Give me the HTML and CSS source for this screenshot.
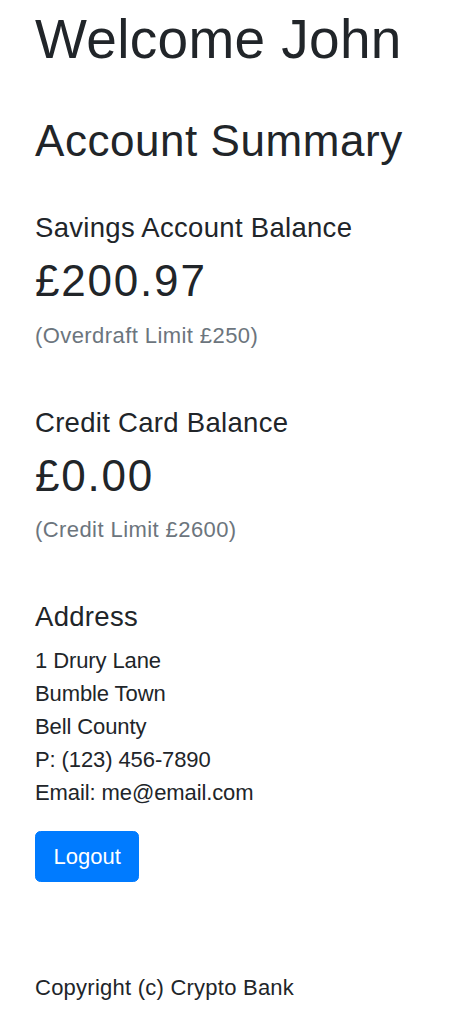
FILE: index.html
```html
<!DOCTYPE html>
<html lang="en">
<head>
<meta charset="utf-8">
<title>Crypto Bank</title>
<link rel="stylesheet" href="styles.css">
</head>
<body>
<div class="container">
  <h1 class="welcome">Welcome John</h1>
  <h2 class="summary-title">Account Summary</h2>

  <section class="account">
    <h5 class="account-label">Savings Account Balance</h5>
    <h2 class="amount">£200.97</h2>
    <p class="limit">(Overdraft Limit £250)</p>
  </section>

  <section class="account">
    <h5 class="account-label">Credit Card Balance</h5>
    <h2 class="amount">£0.00</h2>
    <p class="limit">(Credit Limit £2600)</p>
  </section>

  <section class="address-block">
    <h5 class="account-label">Address</h5>
    <address class="address">
      1 Drury Lane<br>
      Bumble Town<br>
      Bell County<br>
      P: (123) 456-7890<br>
      Email: me@email.com
    </address>
  </section>

  <button class="btn-logout" type="button">Logout</button>

  <footer class="footer">Copyright (c) Crypto Bank</footer>
</div>
</body>
</html>
```
FILE: styles.css
```css
html, body {
  margin: 0;
  padding: 0;
  background: #ffffff;
}

body {
  font-family: "Liberation Sans", Arial, sans-serif;
  font-size: 22px;
  line-height: 33px;
  color: #212529;
}

.container {
  padding: 6px 20px 0 35px;
}

.welcome {
  font-size: 55px;
  line-height: 66px;
  font-weight: 400;
  letter-spacing: 0.33px;
  margin: 0 0 43px;
}

.summary-title {
  font-size: 44px;
  line-height: 52.8px;
  font-weight: 400;
  letter-spacing: 0.55px;
  margin: 0 0 43px;
}

.account-label {
  font-size: 27.5px;
  line-height: 33px;
  font-weight: 400;
  letter-spacing: 0.3px;
  margin: 0 0 11px;
}

.amount {
  font-size: 44px;
  line-height: 52.8px;
  font-weight: 400;
  letter-spacing: 1.8px;
  margin: 0 0 11px;
}

.limit {
  color: #6c757d;
  letter-spacing: 0.42px;
  margin: 0 0 54px;
}

.address {
  font-style: normal;
  letter-spacing: -0.1px;
  margin: 0 0 22px;
}

.btn-logout {
  display: block;
  font-family: inherit;
  font-size: 22px;
  line-height: 33px;
  color: #ffffff;
  background: #007bff;
  border: 1px solid #007bff;
  border-radius: 5.5px;
  padding: 8px 17.5px;
  margin: 0;
  cursor: pointer;
}

.footer {
  margin-top: 89px;
  letter-spacing: 0.24px;
}
```
